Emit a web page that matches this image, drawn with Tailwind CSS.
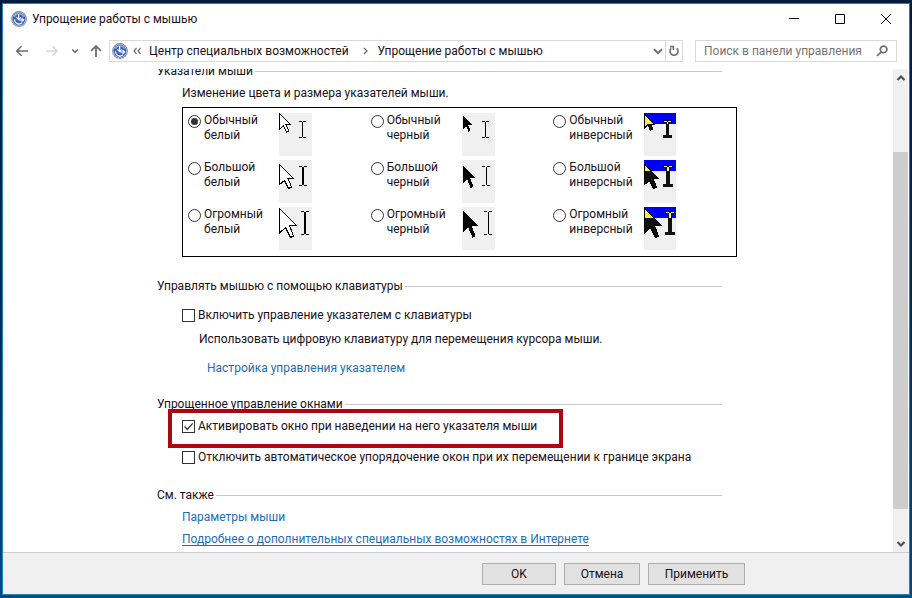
<!DOCTYPE html>
<html lang="ru">
<head>
  <meta charset="UTF-8" />
  <meta name="viewport" content="width=device-width, initial-scale=1.0"/>
  <title>Упрощение работы с мышью</title>
  <script src="https://cdn.jsdelivr.net/npm/@tailwindcss/browser@4"></script>
</head>
<body class="h-screen overflow-hidden bg-linear-to-b from-[#001c40] via-[#012a58] to-[#004a85] pt-[3px] pb-[3px] pl-[2px] pr-[2px] font-[Roboto,'Noto_Sans',sans-serif] text-xs leading-4 text-[#1a1018]">

  <!-- shared symbols -->
  <svg class="hidden">
    <defs>
      <symbol id="ease" viewBox="0 0 16 16">
        <circle cx="8" cy="8" r="7.9" fill="#7d8594"/>
        <circle cx="8" cy="8" r="7.1" fill="#c3cde0"/>
        <circle cx="8" cy="8" r="6.4" fill="#3a62b8"/>
        <path d="M3.2 6A5.2 5.2 0 0 1 12.8 6" fill="none" stroke="#8aa4dc" stroke-width="1.6"/>
        <path d="M7.6 3V8.4M5.4 6.4l2.2 2.2 2.2-2.2M8 9h4.4M10.6 7.2L12.6 9l-2 1.8" fill="none" stroke="#fff" stroke-width="1.2"/>
        <path d="M3.6 8.4A4.4 4.4 0 0 0 11 11.8" fill="none" stroke="#fff" stroke-width="1.2"/>
      </symbol>
      <path id="arrow" d="M0 0V16L4 12.4L7 18.6L9.4 17.4L6.6 11.4H11.5Z"/>
    </defs>
  </svg>

  <div class="flex h-full flex-col border border-[#1d84ba] bg-white">
    <!-- title bar -->
    <header class="flex h-[30px] shrink-0 items-center pl-2 pr-[17px]">
      <svg class="size-4"><use href="#ease"/></svg>
      <h1 class="ml-[5px] flex-1">Упрощение работы с мышью</h1>
      <div class="flex items-center gap-[34px] text-black">
        <button aria-label="Свернуть"><svg class="size-3" viewBox="0 0 12 12" fill="none" stroke="currentColor"><path d="M1 5.5H11"/></svg></button>
        <button aria-label="Развернуть"><svg class="size-3" viewBox="0 0 12 12" fill="none" stroke="currentColor"><path d="M1.5 1.5H10.5V10.5H1.5Z"/></svg></button>
        <button aria-label="Закрыть"><svg class="size-3" viewBox="0 0 12 12" fill="none" stroke="currentColor"><path d="M1 1L11 11M11 1L1 11"/></svg></button>
      </div>
    </header>

    <!-- navigation -->
    <nav class="mt-[6px] flex h-[22px] shrink-0 items-center pr-3 pl-3 text-[#6e6e6e]">
      <button aria-label="Назад"><svg class="h-3 w-[14px]" viewBox="0 0 14 12" fill="none" stroke="currentColor" stroke-width="1.6"><path d="M13 6H2M6.5 1.2L1.7 6l4.8 4.8"/></svg></button>
      <button aria-label="Вперед" class="ml-4 text-[#d6d6d6]"><svg class="h-3 w-[14px]" viewBox="0 0 14 12" fill="none" stroke="currentColor" stroke-width="1.5"><path d="M1 6H12M7.5 1.2L12.3 6l-4.8 4.8"/></svg></button>
      <button aria-label="Последние страницы" class="ml-3"><svg class="h-2 w-2" viewBox="0 0 8 8" fill="none" stroke="currentColor" stroke-width="1.6"><path d="M1.2 2.5L4 5.3l2.8-2.8"/></svg></button>
      <button aria-label="Вверх" class="ml-[11px]"><svg class="h-[14px] w-3" viewBox="0 0 12 14" fill="none" stroke="currentColor" stroke-width="1.8"><path d="M6 13V2M1.2 6.8L6 2l4.8 4.8"/></svg></button>
      <div class="ml-[7px] flex h-full flex-1 items-center border border-[#d9d9d9] text-[#1a1018]">
        <svg class="ml-[2px] size-4 shrink-0"><use href="#ease"/></svg>
        <svg class="ml-[5px] h-2 w-2" viewBox="0 0 8 8" fill="none" stroke="#6e6e6e" stroke-width="1.2"><path d="M3.5 1L1 4l2.5 3M7.5 1L5 4l2.5 3"/></svg>
        <a href="#" class="ml-2">Центр специальных возможностей</a>
        <svg class="ml-[13px] h-2 w-2" viewBox="0 0 8 8" fill="none" stroke="#6e6e6e" stroke-width="1.3"><path d="M2 1l3 3-3 3"/></svg>
        <a href="#" class="ml-2 flex-1">Упрощение работы с мышью</a>
        <button aria-label="Предыдущие расположения" class="px-px text-[#6e6e6e]"><svg class="h-3 w-3" viewBox="0 0 12 12" fill="none" stroke="currentColor" stroke-width="2"><path d="M2 4.2l4 4 4-4"/></svg></button>
        <button aria-label="Обновить" class="flex h-full w-[17px] items-center justify-center border-l border-[#d9d9d9] text-[#6e6e6e]"><svg class="h-3 w-3" viewBox="0 0 12 12" fill="none" stroke="currentColor" stroke-width="1.6"><path d="M3.2 3.4A4 4 0 1 0 8.8 3.4M2 1.6h3.4V5"/></svg></button>
      </div>
      <div class="ml-3 flex h-full w-[202px] items-center border border-[#d9d9d9] pr-2 pl-2">
        <input type="text" aria-label="Поиск" placeholder="Поиск в панели управления" class="min-w-0 flex-1 outline-none placeholder:text-[#757575]"/>
        <svg class="h-3 w-3" viewBox="0 0 12 12" fill="none" stroke="currentColor" stroke-width="1.7"><circle cx="7.6" cy="4.4" r="3.3"/><path d="M5.2 6.8L1 11"/></svg>
      </div>
    </nav>

    <!-- scrolled page -->
    <div class="mt-[7px] flex min-h-0 flex-1">
      <main class="min-w-0 flex-1 overflow-hidden pl-[154px]">
        <section class="mt-[-6px]">
          <div class="flex max-w-[565px] items-center gap-[2px]"><h2>Указатели мыши</h2><hr class="flex-1 border-[#c8c8cc]"/></div>
          <p class="mt-[6px] ml-[25px]">Изменение цвета и размера указателей мыши.</p>
          <div class="mt-[6px] ml-[25px] grid h-[150px] max-w-[555px] grid-cols-3 content-start gap-y-1 border border-black pt-[5px] pl-[5px] leading-[15px]">
            <div class="flex h-[43px]">
              <input id="p1" type="radio" name="pointer" checked class="mt-[2px] size-[13px] appearance-none rounded-full border border-[#333] bg-white bg-clip-content p-[2px] checked:bg-[#333]"/>
              <label for="p1" class="w-[78px] pl-[3px]">Обычный<br>белый</label>
              <svg class="h-[43px] w-[33px] bg-[#f0f0f0]" viewBox="0 0 33 43" shape-rendering="crispEdges">
                <use href="#arrow" x="0.5" y="0.5" fill="#fff" stroke="#000"/>
                <path d="M20 8.5h3M24 8.5h3M23.5 9V24M20 24.5h3M24 24.5h3" stroke="#000"/>
              </svg>
            </div>
            <div class="flex h-[43px]">
              <input id="p2" type="radio" name="pointer" class="mt-[2px] size-[13px] appearance-none rounded-full border border-[#333] bg-white bg-clip-content p-[2px] checked:bg-[#333]"/>
              <label for="p2" class="w-[78px] pl-[3px]">Обычный<br>черный</label>
              <svg class="h-[43px] w-[33px] bg-[#f0f0f0]" viewBox="0 0 33 43" shape-rendering="crispEdges">
                <use href="#arrow" transform="translate(1 2) scale(.8 .9)"/>
                <path d="M20 8.5h3M24 8.5h3M23.5 9V24M20 24.5h3M24 24.5h3" stroke="#000"/>
              </svg>
            </div>
            <div class="flex h-[43px]">
              <input id="p3" type="radio" name="pointer" class="mt-[2px] size-[13px] appearance-none rounded-full border border-[#333] bg-white bg-clip-content p-[2px] checked:bg-[#333]"/>
              <label for="p3" class="w-[78px] pl-[3px]">Обычный<br>инверсный</label>
              <svg class="h-[43px] w-[32px] bg-[#f0f0f0]" viewBox="0 0 32 43" shape-rendering="crispEdges">
                <rect width="32" height="11" fill="#00f"/>
                <path d="M.5 .5V15L4 12L6.5 17.5L9 16L6.5 11H10Z" fill="#111" stroke="#000"/>
                <path d="M1 2V13L4 10.500H9Z" fill="#f8f040"/>
                <path d="M19 7h9v3h-3v12h3v3H19v-3h3V10h-3Z" fill="#111"/>
                <path d="M20 8h3v1h1V8h3v1h-3v2h-1V9h-3Z" fill="#f8f060"/>
              </svg>
            </div>
            <div class="flex h-[43px]">
              <input id="p4" type="radio" name="pointer" class="mt-[2px] size-[13px] appearance-none rounded-full border border-[#333] bg-white bg-clip-content p-[2px] checked:bg-[#333]"/>
              <label for="p4" class="w-[78px] pl-[3px]">Большой<br>белый</label>
              <svg class="h-[43px] w-[33px] bg-[#f0f0f0]" viewBox="0 0 33 43" shape-rendering="crispEdges">
                <path d="M.5 4.5V24.5L5.5 20.5L9.5 28.5L12.5 27L9 18.5H14.5Z" fill="#fff" stroke="#000"/>
                <path d="M20 6.5h3M25 6.5h3M20 25.5h3M25 25.5h3" stroke="#000"/><path d="M24 7V25" stroke="#000" stroke-width="2"/>
              </svg>
            </div>
            <div class="flex h-[43px]">
              <input id="p5" type="radio" name="pointer" class="mt-[2px] size-[13px] appearance-none rounded-full border border-[#333] bg-white bg-clip-content p-[2px] checked:bg-[#333]"/>
              <label for="p5" class="w-[78px] pl-[3px]">Большой<br>черный</label>
              <svg class="h-[43px] w-[33px] bg-[#f0f0f0]" viewBox="0 0 33 43" shape-rendering="crispEdges">
                <path d="M1 6V23L5 19L8.5 28L11.5 26.5L8 18H13Z"/>
                <path d="M20 6.5h3M25 6.5h3M24.5 7V25M20 25.5h3M25 25.5h3" stroke="#000"/>
              </svg>
            </div>
            <div class="flex h-[43px]">
              <input id="p6" type="radio" name="pointer" class="mt-[2px] size-[13px] appearance-none rounded-full border border-[#333] bg-white bg-clip-content p-[2px] checked:bg-[#333]"/>
              <label for="p6" class="w-[78px] pl-[3px]">Большой<br>инверсный</label>
              <svg class="h-[43px] w-[32px] bg-[#f0f0f0]" viewBox="0 0 32 43" shape-rendering="crispEdges">
                <rect width="32" height="11" fill="#00f"/>
                <path d="M.5 4.5V24.5L5.5 20.5L9.5 28.5L12.5 27L9 18.5H14.5Z" fill="#111" stroke="#000"/>
                <path d="M1 6V11H6Z" fill="#f8f040"/>
                <path d="M19 5h10v3h-3v16h3v3H19v-3h3V8h-3Z" fill="#111"/>
                <path d="M20 6h3v1h2V6h3v1h-3v4h-2V7h-3Z" fill="#f8f060"/>
              </svg>
            </div>
            <div class="flex h-[43px]">
              <input id="p7" type="radio" name="pointer" class="mt-[2px] size-[13px] appearance-none rounded-full border border-[#333] bg-white bg-clip-content p-[2px] checked:bg-[#333]"/>
              <label for="p7" class="w-[78px] pl-[3px]">Огромный<br>белый</label>
              <svg class="h-[43px] w-[33px] bg-[#f0f0f0]" viewBox="0 0 33 43" shape-rendering="crispEdges">
                <path d="M.5 1.5V26L6.5 20.5L11.5 30.5L14.5 29L10.5 18.5H17.5Z" fill="#fff" stroke="#000"/>
                <path d="M22 4.5h3M27 4.5h3M22 27.5h3M27 27.5h3" stroke="#000"/><path d="M26 5V27" stroke="#000" stroke-width="2"/>
              </svg>
            </div>
            <div class="flex h-[43px]">
              <input id="p8" type="radio" name="pointer" class="mt-[2px] size-[13px] appearance-none rounded-full border border-[#333] bg-white bg-clip-content p-[2px] checked:bg-[#333]"/>
              <label for="p8" class="w-[78px] pl-[3px]">Огромный<br>черный</label>
              <svg class="h-[43px] w-[33px] bg-[#f0f0f0]" viewBox="0 0 33 43" shape-rendering="crispEdges">
                <path d="M1 3V25L6 20L10.5 30.5L13.5 29L9.5 18.5H16Z"/>
                <path d="M22 4.5h3M27 4.5h3M26.5 5V27M22 27.5h3M27 27.5h3" stroke="#000"/>
              </svg>
            </div>
            <div class="flex h-[43px]">
              <input id="p9" type="radio" name="pointer" class="mt-[2px] size-[13px] appearance-none rounded-full border border-[#333] bg-white bg-clip-content p-[2px] checked:bg-[#333]"/>
              <label for="p9" class="w-[78px] pl-[3px]">Огромный<br>инверсный</label>
              <svg class="h-[43px] w-[32px] bg-[#f0f0f0]" viewBox="0 0 32 43" shape-rendering="crispEdges">
                <rect width="32" height="11" fill="#00f"/>
                <path d="M.5 1.5V26L6.5 20.5L11.5 30.5L14.5 29L10.5 18.5H17.5Z" fill="#111" stroke="#000"/>
                <path d="M1 3V11H9Z" fill="#f8f040"/>
                <path d="M21 4h10v3h-3v18h3v3H21v-3h3V7h-3Z" fill="#111"/>
                <path d="M22 5h3v1h2V5h3v1h-3v5h-2V6h-3Z" fill="#f8f060"/>
              </svg>
            </div>
          </div>
        </section>

        <section class="mt-[21px]">
          <div class="flex max-w-[565px] items-center gap-[2px]"><h2>Управлять мышью с помощью клавиатуры</h2><hr class="flex-1 border-[#c8c8cc]"/></div>
          <div class="mt-[13px] ml-[25px] flex items-center gap-[3px]">
            <input id="keys" type="checkbox" class="size-[13px] appearance-none border border-[#333] bg-white"/>
            <label for="keys">Включить управление указателем с клавиатуры</label>
          </div>
          <p class="mt-2 ml-[42px]">Использовать цифровую клавиатуру для перемещения курсора мыши.</p>
          <a href="#" class="mt-[13px] ml-[50px] block w-fit text-[#1f6db5]">Настройка управления указателем</a>
        </section>

        <section class="mt-5">
          <div class="flex max-w-[565px] items-center gap-[2px]"><h2>Упрощенное управление окнами</h2><hr class="flex-1 border-[#c8c8cc]"/></div>
          <div class="relative mt-[6px] ml-[25px] flex items-center gap-[3px]">
            <span class="relative size-[13px]">
              <input id="hover" type="checkbox" checked class="peer block size-[13px] appearance-none border border-[#333] bg-white"/>
              <svg class="pointer-events-none absolute inset-0 hidden size-[13px] peer-checked:block" viewBox="0 0 13 13" fill="none" stroke="#333" stroke-width="1.2"><path d="M2.5 6.5L5.3 9.5L10.7 3.3"/></svg>
            </span>
            <label for="hover">Активировать окно при наведении на него указателя мыши</label>
            <!-- highlight frame -->
            <div class="pointer-events-none absolute top-[-9px] left-[-14px] h-[39px] w-[395px] border-4 border-[#a8080f]"></div>
          </div>
          <div class="mt-[15px] ml-[25px] flex items-center gap-[3px]">
            <input id="snap" type="checkbox" class="size-[13px] appearance-none border border-[#333] bg-white"/>
            <label for="snap">Отключить автоматическое упорядочение окон при их перемещении к границе экрана</label>
          </div>
        </section>

        <section class="mt-[22px]">
          <div class="flex max-w-[565px] items-center gap-[2px]"><h2>См. также</h2><hr class="flex-1 border-[#c8c8cc]"/></div>
          <a href="#" class="mt-[6px] ml-[25px] block w-fit text-[#1f6db5]">Параметры мыши</a>
          <a href="#" class="mt-[6px] ml-[25px] block w-fit text-[#1f6db5] underline underline-offset-2">Подробнее о дополнительных специальных возможностях в Интернете</a>
        </section>
      </main>

      <!-- scrollbar -->
      <div class="mr-px flex w-[15px] flex-col items-center bg-[#f0f0f0] text-[#505050]">
        <svg class="mt-[3px] h-3 w-3" viewBox="0 0 12 12" fill="none" stroke="currentColor" stroke-width="2.2"><path d="M2.5 8L6 4.5L9.5 8"/></svg>
        <div class="mt-[68px] w-full flex-1 bg-[#cdcdcd]"></div>
        <svg class="mt-[29px] mb-[2px] h-3 w-3" viewBox="0 0 12 12" fill="none" stroke="currentColor" stroke-width="2.2"><path d="M2.5 4L6 7.5L9.5 4"/></svg>
      </div>
    </div>

    <footer class="flex h-[42px] shrink-0 items-center justify-end gap-2 border-t border-[#c9ccd2] bg-[#f0f0f0] pr-[164px]">
      <button class="h-[22px] w-[74px] border border-[#adadad] bg-[#e1e1e1]">OK</button>
      <button class="h-[22px] w-[76px] border border-[#adadad] bg-[#e1e1e1]">Отмена</button>
      <button class="h-[22px] w-[97px] border border-[#adadad] bg-[#e1e1e1]">Применить</button>
    </footer>
  </div>
</body>
</html>
